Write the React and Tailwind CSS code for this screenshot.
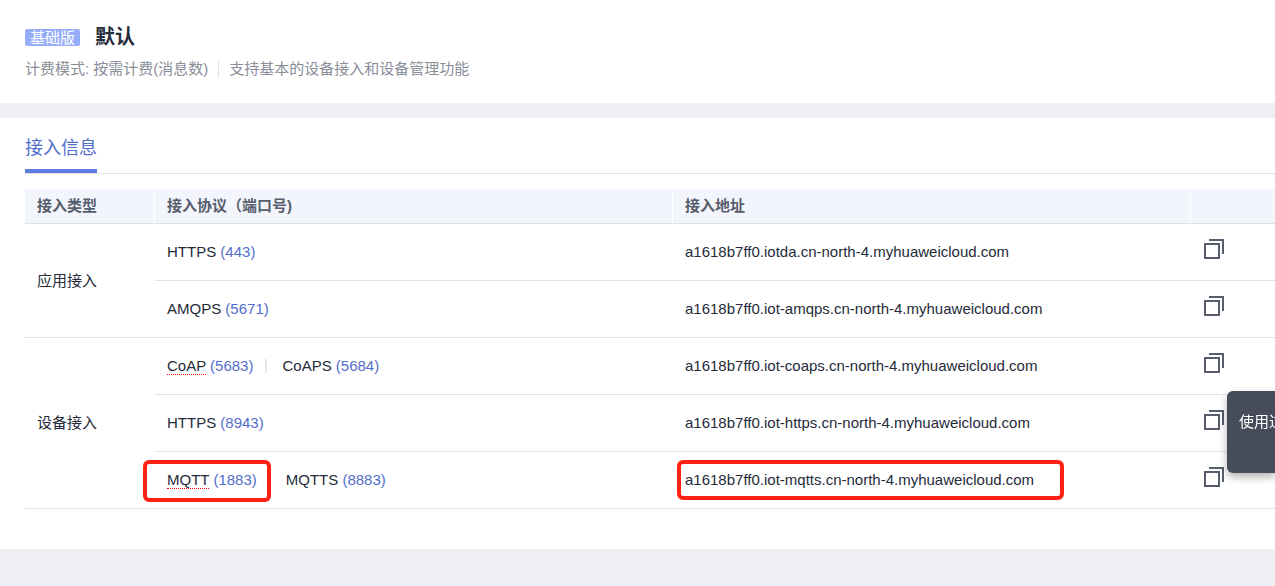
const ACCESS_GROUPS = [
  {
    type: '应用接入',
    rows: [
      {
        protocols: [{ name: 'HTTPS', port: 443 }],
        address: 'a1618b7ff0.iotda.cn-north-4.myhuaweicloud.com',
      },
      {
        protocols: [{ name: 'AMQPS', port: 5671 }],
        address: 'a1618b7ff0.iot-amqps.cn-north-4.myhuaweicloud.com',
      },
    ],
  },
  {
    type: '设备接入',
    rows: [
      {
        protocols: [
          { name: 'CoAP', port: 5683, insecure: true },
          { name: 'CoAPS', port: 5684 },
        ],
        address: 'a1618b7ff0.iot-coaps.cn-north-4.myhuaweicloud.com',
      },
      {
        protocols: [{ name: 'HTTPS', port: 8943 }],
        address: 'a1618b7ff0.iot-https.cn-north-4.myhuaweicloud.com',
      },
      {
        protocols: [
          { name: 'MQTT', port: 1883, insecure: true },
          { name: 'MQTTS', port: 8883 },
        ],
        address: 'a1618b7ff0.iot-mqtts.cn-north-4.myhuaweicloud.com',
        marked: true,
      },
    ],
  },
]

function CopyIcon() {
  return (
    <svg width="20" height="20" viewBox="0 0 20 20" fill="none" stroke="#575d6c" strokeWidth="2" aria-hidden="true">
      <path d="M1 5h14v14H1z" />
      <path d="M5 1h14v14" />
    </svg>
  )
}

function Protocol({ name, port, insecure }) {
  return (
    <span className="whitespace-nowrap">
      <span className={insecure ? 'border-b border-dotted border-b-[#ff0000]' : ''}>{name}</span>{' '}
      <span className="text-[#526ecc]">({port})</span>
    </span>
  )
}

function AccessRow({ row, type, span }) {
  return (
    <tr className="h-[57px]">
      {type && (
        <td rowSpan={span} className="border-b border-[#dfe1e6] px-3">
          {type}
        </td>
      )}
      <td className="relative border-b border-[#dfe1e6] px-3">
        <div className="flex items-center">
          {row.protocols.map((protocol, i) => (
            <div key={protocol.name} className="flex items-center">
              {i > 0 && <span className="ml-3 mr-[15px] h-[14px] w-[2px] bg-[#e4e5ee]" />}
              <Protocol {...protocol} />
            </div>
          ))}
        </div>
        {row.marked && (
          <span className="absolute -left-3 top-2 h-[42px] w-[128px] rounded-md border-4 border-[#ff2214]" />
        )}
      </td>
      <td className="relative border-b border-[#dfe1e6] px-3">
        {row.address}
        {row.marked && (
          <span className="absolute left-1 top-2 h-10 w-[387px] rounded-md border-4 border-[#ff2214]" />
        )}
      </td>
      <td className="border-b border-[#dfe1e6] pl-[13px]">
        <button type="button" aria-label="复制" className="block pb-[6px]">
          <CopyIcon />
        </button>
      </td>
    </tr>
  )
}

function AccessTable() {
  return (
    <table className="mt-[15px] w-full table-fixed border-separate border-spacing-0 text-left">
      <colgroup>
        <col className="w-[130px]" />
        <col />
        <col />
        <col className="w-[84px]" />
      </colgroup>
      <thead>
        <tr className="h-[35px] bg-[#f2f5fc] text-[#575d6c]">
          <th className="border-b border-r border-b-[#dfe1e6] border-r-white px-3">接入类型</th>
          <th className="border-b border-r border-b-[#dfe1e6] border-r-white px-3">接入协议（端口号)</th>
          <th className="border-b border-r border-b-[#dfe1e6] border-r-white px-3">接入地址</th>
          <th aria-label="操作" className="border-b border-b-[#dfe1e6] px-3" />
        </tr>
      </thead>
      <tbody>
        {ACCESS_GROUPS.map((group) =>
          group.rows.map((row, i) => (
            <AccessRow
              key={row.address}
              row={row}
              type={i === 0 ? group.type : null}
              span={group.rows.length}
            />
          ))
        )}
      </tbody>
    </table>
  )
}

export default function App() {
  return (
    <div className="min-h-screen overflow-hidden bg-[#eeeff5] font-['Liberation_Sans','Noto_Sans_CJK_SC',sans-serif] text-[15px] leading-5 text-[#252b3a]">
      {/* Instance summary */}
      <header className="bg-white pb-6 pl-[25px] pt-[23px]">
        <div className="flex items-center gap-[15px]">
          <span className="rounded-xs bg-[#96adfa] px-[5px] leading-[17px] text-white">基础版</span>
          <h1 className="text-xl font-bold leading-7">默认</h1>
        </div>
        <div className="mt-2 flex items-center text-[#8a8e99]">
          <span>计费模式: 按需计费(消息数)</span>
          <span className="mx-[10px] h-[17px] w-px bg-[#dfe1e6]" />
          <span>支持基本的设备接入和设备管理功能</span>
        </div>
      </header>

      {/* Access details */}
      <main className="mt-[15px] bg-white pb-10 pl-[25px] pt-3">
        <div role="tablist" className="flex border-b border-[#dfe1e6]">
          <button
            type="button"
            role="tab"
            aria-selected="true"
            className="border-b-4 border-[#5e7ce0] pb-[7px] pt-[5px] text-lg leading-[27px] text-[#526ecc]"
          >
            接入信息
          </button>
        </div>
        <AccessTable />
      </main>

      {/* Tip docked to the window edge */}
      <aside className="fixed right-0 top-[391px] h-[82px] w-12 overflow-hidden whitespace-nowrap rounded-l-md bg-[#464c59] pl-3 pt-[21px] text-white shadow-[0_4px_8px_rgba(0,0,0,0.3)]">
        使用过程
      </aside>
    </div>
  )
}
